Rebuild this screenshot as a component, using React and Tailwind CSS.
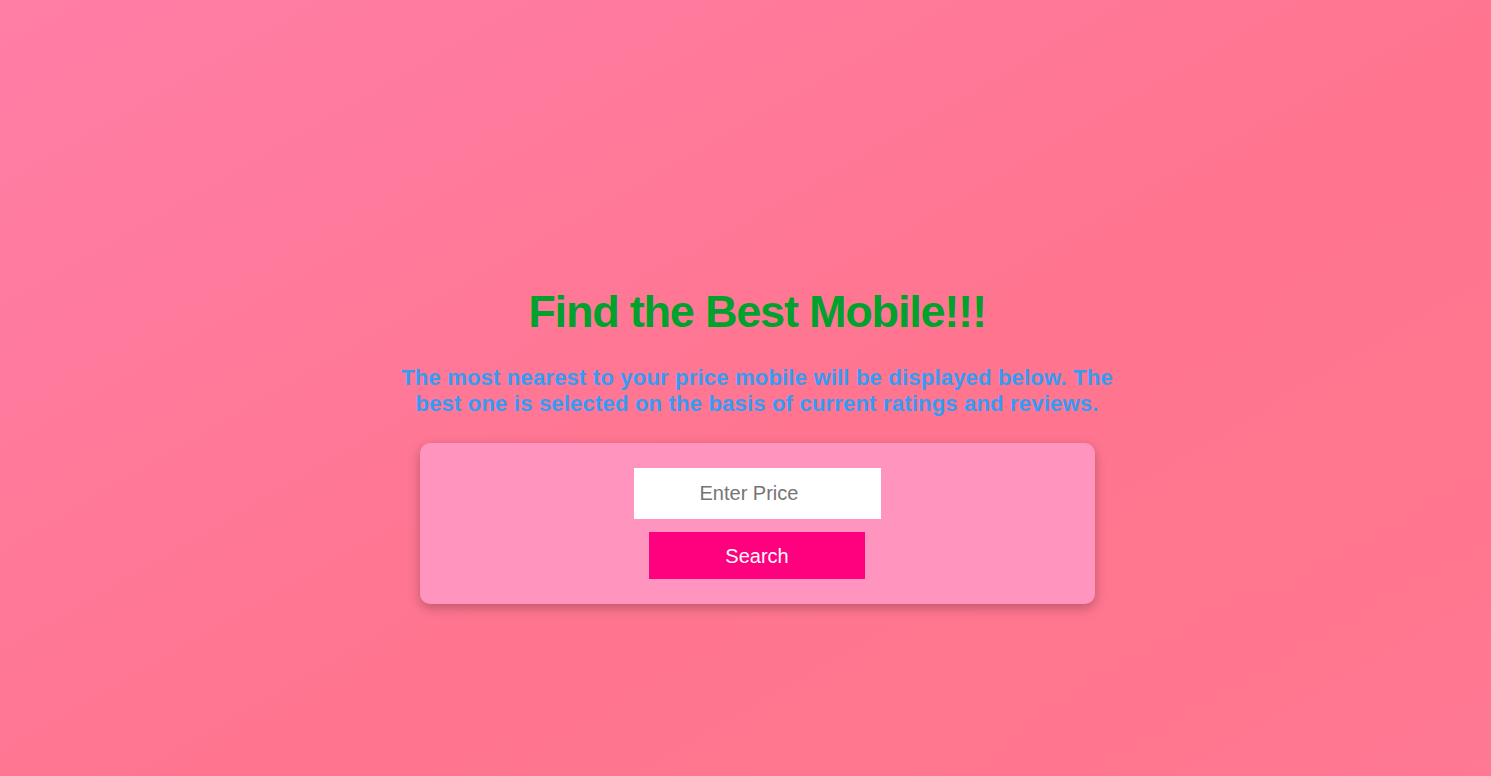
import React, { useState } from "react";

export default function App() {
  const [price, setPrice] = useState("");

  return (
    <div className="min-h-screen w-full bg-[linear-gradient(150deg,#ff7ea6_0%,#ff7590_55%,#ff768e_85%,#ff7894_100%)] font-['Liberation_Sans',Arial,sans-serif]">
      <div className="flex flex-col items-center pt-[286px] pl-[23px]">
        {/* Heading */}
        <h1 className="text-[45px] leading-[52px] font-bold tracking-[-1.2px] text-[#00a22d]">
          Find the Best Mobile!!!
        </h1>
        <p className="mt-[27px] max-w-[725px] text-center text-[22px] leading-[26px] font-bold tracking-[0.2px] text-[#339cf5]">
          The most nearest to your price mobile will be displayed below. The
          best one is selected on the basis of current ratings and reviews.
        </p>

        {/* Search card */}
        <div className="mt-[26px] w-[675px] rounded-[10px] bg-[#ff94bf] shadow-[0_4px_12px_rgba(0,0,0,0.25)] py-[25px] flex flex-col items-center gap-[13px]">
          <input
            type="text"
            value={price}
            onChange={(e) => setPrice(e.target.value)}
            placeholder="Enter Price"
            className="w-[247px] h-[51px] bg-white pl-[66px] pr-[12px] text-[20px] text-gray-700 placeholder:text-[#757575] outline-none"
          />
          <button className="w-[216px] h-[47px] bg-[#ff007f] text-white text-[20px]">
            Search
          </button>
        </div>
      </div>
    </div>
  );
}
